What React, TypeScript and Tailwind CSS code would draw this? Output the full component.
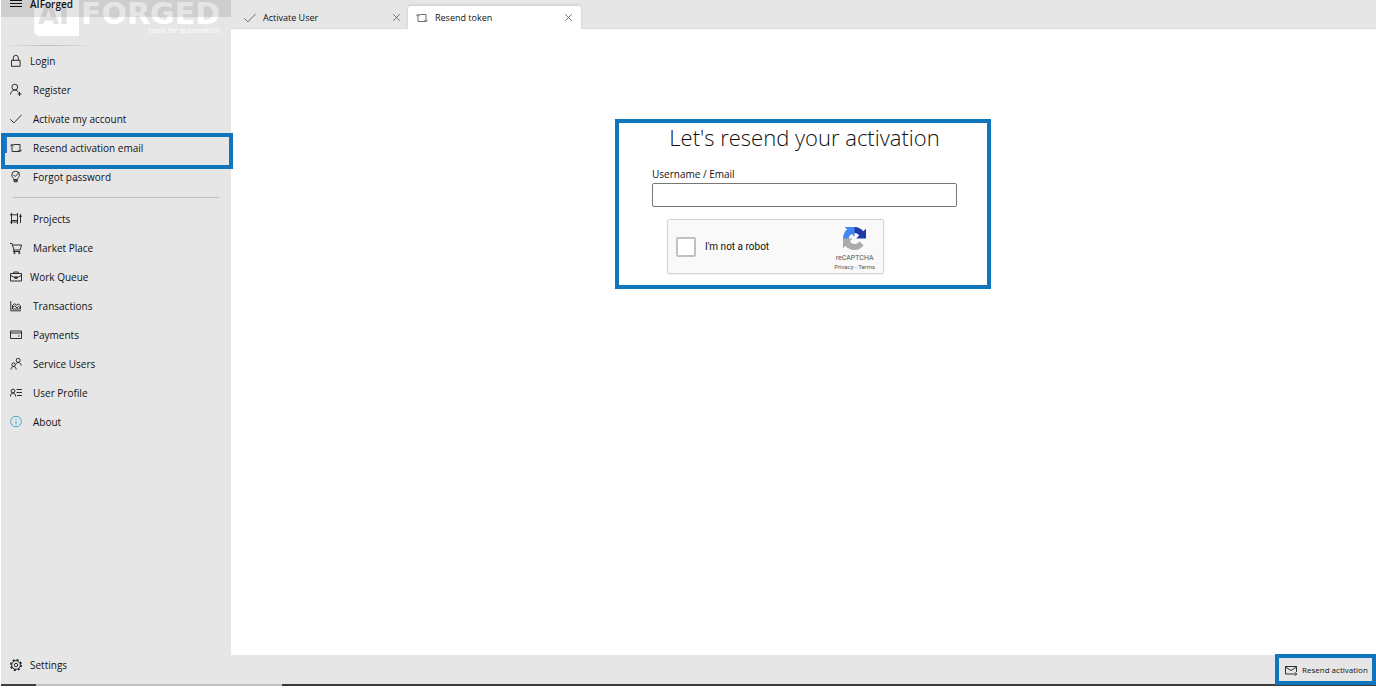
import type { ReactNode } from "react";

type IconProps = { children: ReactNode; className?: string };

function Icon({ children, className = "size-3" }: IconProps) {
  return (
    <svg
      viewBox="0 0 12 12"
      fill="none"
      stroke="currentColor"
      strokeWidth="0.85"
      className={`shrink-0 overflow-visible ${className}`}
      aria-hidden="true"
    >
      {children}
    </svg>
  );
}

const resend = <path d="M2 2.5v7h7.5M3.5 2.5H10v7M.3 4.2 2 2.3l1.7 1.9M8.3 7.8 10 9.6l1.7-1.8" />;
const check = <path d="M.3 6.3 3.9 9.9 11.7 1.8" />;
const cross = <path d="m.5.5 11 11M11.5.5l-11 11" strokeWidth="1.4" />;

type Item = { label: string; icon: ReactNode; tight?: boolean; active?: boolean; blue?: boolean };

const account: Item[] = [
  { label: "Login", tight: true, icon: <path d="M1.5 5.3h8.6v6H1.5zM3.3 5.3V2.8a2.5 2.5 0 0 1 5 0v2.5" /> },
  {
    label: "Register",
    icon: <path d="M.5 10.5C.8 7.8 2.6 6 4.8 6c1.6 0 3 1 3.8 2.5M9.5 8v4M7.6 10h4M7.7 3.1a2.9 2.9 0 1 1-5.8 0 2.9 2.9 0 0 1 5.8 0" />,
  },
  { label: "Activate my account", icon: check },
  { label: "Resend activation email", icon: resend, active: true },
  {
    label: "Forgot password",
    icon: (
      <path d="M4 8.5C3.8 7 1.8 6.4 1.8 4a3.8 3.8 0 0 1 7.6 0c0 2.4-2 3-2.2 4.5zM3.5 3.8 5.2 5.5 9.5 1M4 8.5v2.3h3.2V8.5M4 9.7h3.2" />
    ),
  },
];

const work: Item[] = [
  { label: "Projects", icon: <path d="M1.5 0v11M7.5 0v11M0 1.8h7.5M0 9h7.5M1.5 7.5h6M10.5 1v9M9 3.2h3" /> },
  {
    label: "Market Place",
    icon: <path d="M0 1.5h2l2 6.5h6l1.6-5H2.6M4 8l-.8 1.5h7M5.2 11a.7.7 0 1 1-1.4 0 .7.7 0 0 1 1.4 0M10 11a.7.7 0 1 1-1.4 0 .7.7 0 0 1 1.4 0" />,
  },
  { label: "Work Queue", tight: true, icon: <path d="M.5 2.5h11V10H.5zM3.8 2.5V1h4.4v1.5M.5 4.3l4 2.2h3l4-2.2M4.8 5.8h2.4v1.5H4.8z" /> },
  {
    label: "Transactions",
    icon: <path d="M.8 1v9.8H11M2.5 9V5.5l2.2-1.8 2 1.6 1.6-1.5L10.5 6v3zM2.5 7.5l2.2-1.7L7 8l1.5-1.5 2 1.5" />,
  },
  { label: "Payments", icon: <path d="M.5 2h11v7.5H.5zM.5 4h11M8 7h1.5" /> },
  {
    label: "Service Users",
    icon: <path d="M1 11.5c.2-2 1.2-3 2.6-3s2.4 1 2.6 3M5.4 6.7a1.8 1.8 0 1 1-3.6 0 1.8 1.8 0 0 1 3.6 0M6 6c.4-1 1.2-1.5 2.2-1.5 1.6 0 2.8 1.1 3 3M10.2 2.3a2 2 0 1 1-4 0 2 2 0 0 1 4 0" />,
  },
  {
    label: "User Profile",
    icon: <path d="M.4 9.5C.5 7.3 1.5 6 3 6s2.5 1.3 2.6 3.5M4.9 4a1.9 1.9 0 1 1-3.8 0 1.9 1.9 0 0 1 3.8 0M6.5 2.5H12M6.5 5.5H12M7 8.5h5" />,
  },
  { label: "About", blue: true, icon: <path d="M11.3 5.5A5.3 5.3 0 1 1 .7 5.5a5.3 5.3 0 0 1 10.6 0M6 4.8v3.8M6 2.6v1.1" /> },
];

function NavList({ items }: { items: Item[] }) {
  return (
    <ul>
      {items.map(({ label, icon, tight, active, blue }) => (
        <li key={label} className="relative">
          <a
            href="#"
            aria-current={active ? "page" : undefined}
            className={`flex h-[29px] items-center pl-[9px] ${tight ? "gap-2" : "gap-[11px]"}`}
          >
            <Icon className={blue ? "size-3 text-[#1e9fd0]" : "size-3"}>{icon}</Icon>
            <span>{label}</span>
          </a>
          {active && (
            <span className="pointer-events-none absolute top-0 -right-0.5 left-0 z-10 h-9 border-4 border-[#0f75bd]">
              <span className="block h-4 w-0.5 bg-[#2f6fd0]" />
            </span>
          )}
        </li>
      ))}
    </ul>
  );
}

function Logo() {
  return (
    <svg viewBox="0 0 190 38" className="ml-8 h-[38px] w-[190px]" aria-label="AIForged, tools for automation">
      <path d="M1 0h45v36H8q-7 0-7-7z" fill="#fff" />
      <text x="5" y="24" fontSize="27" fontWeight="700" fontFamily="DejaVu Sans, sans-serif" fill="#e2e2e2">
        AI
      </text>
      <text x="48" y="24" fontSize="30" fontWeight="700" fontFamily="DejaVu Sans, sans-serif" fill="#fff">
        FORGED
      </text>
      <text x="187" y="33" textAnchor="end" fontSize="7" fontFamily="DejaVu Sans, sans-serif" fill="#fff">
        tools for automation
      </text>
    </svg>
  );
}

function CaptchaLogo() {
  return (
    <svg viewBox="0 0 64 64" className="size-[23px]" aria-hidden="true">
      <path
        d="M64 31.955l-.033-1.37V4.687l-7.16 7.16C50.948 4.674 42.033.093 32.05.093c-10.4 0-19.622 4.96-25.458 12.64l11.736 11.86a15.55 15.55 0 0 1 4.754-5.334c2.05-1.6 4.952-2.906 8.968-2.906.485 0 .86.057 1.135.163 4.976.393 9.288 3.14 11.828 7.124l-8.307 8.307L64 31.953"
        fill="#1c3aa9"
      />
      <path
        d="M31.862.094l-1.37.033H4.594l7.16 7.16C4.58 13.147 0 22.06 0 32.046c0 10.4 4.96 19.622 12.64 25.458L24.5 45.768a15.55 15.55 0 0 1-5.334-4.754c-1.6-2.05-2.906-4.952-2.906-8.968 0-.485.057-.86.163-1.135.393-4.976 3.14-9.288 7.124-11.828l8.307 8.307L31.86.095"
        fill="#4285f4"
      />
      <path
        d="M.001 32.045l.033 1.37v25.898l7.16-7.16c5.86 7.173 14.774 11.754 24.76 11.754 10.4 0 19.622-4.96 25.458-12.64l-11.736-11.86a15.55 15.55 0 0 1-4.754 5.334c-2.05 1.6-4.952 2.906-8.968 2.906-.485 0-.86-.057-1.135-.163-4.976-.393-9.288-3.14-11.828-7.124l8.307-8.307c-10.522.04-22.4.066-27.295-.005"
        fill="#ababab"
      />
    </svg>
  );
}

export default function App() {
  return (
    <div className="flex h-screen flex-col bg-white pb-[9px] pl-px font-['Open_Sans','Noto_Sans',sans-serif] text-[10px] leading-[14px] text-[#111]">
      <div className="flex min-h-0 flex-1">
        <aside className="flex w-[230px] shrink-0 flex-col bg-[#e6e6e6]">
          <div className="relative h-[45px] shrink-0">
            <Logo />
            <div className="absolute inset-x-0 top-0 flex h-[17px] items-start gap-2 bg-black/10 pl-[9px]">
              <button type="button" aria-label="Toggle navigation" className="h-2 w-3">
                <svg viewBox="0 0 12 8" stroke="currentColor" className="h-2 w-3" aria-hidden="true">
                  <path d="M0 .5h12M0 3.5h12M0 6.5h12" />
                </svg>
              </button>
              <h1 className="-mt-1 leading-4 font-semibold">AIForged</h1>
            </div>
          </div>
          <nav className="flex flex-1 flex-col">
            <div className="h-px w-24 shrink-0 bg-linear-to-r from-transparent via-[#bdbdbd] to-transparent" />
            <NavList items={account} />
            <hr className="mx-3 my-[6px] border-[#bdbdbd]" />
            <NavList items={work} />
            <a href="#" className="mt-auto mb-[5px] flex h-[29px] items-center gap-2 pl-[9px]">
              <Icon>
                <circle cx="6" cy="6" r="4.3" />
                <circle cx="6" cy="6" r="1.7" />
                <circle cx="6" cy="6" r="5.2" strokeWidth="1.5" strokeDasharray="2.04 2.04" />
              </Icon>
              Settings
            </a>
          </nav>
        </aside>

        <div className="flex min-w-0 flex-1 flex-col">
          <div role="tablist" className="flex h-[29px] shrink-0 items-end border-b border-[#dcdcdc] bg-[#e6e6e6] text-[9px]">
            <div className="flex h-[21px] w-[177px] items-center pl-[13px] pr-2">
              <button type="button" role="tab" aria-selected="false" className="flex flex-1 items-center gap-[7px]">
                <Icon className="size-3 text-[#555]">{check}</Icon>
                Activate User
              </button>
              <button type="button" aria-label="Close Activate User" className="text-[#555]">
                <Icon className="size-[7px]">{cross}</Icon>
              </button>
            </div>
            <div className="-mb-px flex h-[23px] w-[173px] items-center rounded-t-[3px] bg-white pl-2 pr-[9px] shadow-[0_-1px_3px_rgba(0,0,0,0.12)]">
              <button type="button" role="tab" aria-selected="true" className="flex flex-1 items-center gap-[7px]">
                <Icon className="size-3 text-[#555]">{resend}</Icon>
                Resend token
              </button>
              <button type="button" aria-label="Close Resend token" className="text-[#555]">
                <Icon className="size-[7px]">{cross}</Icon>
              </button>
            </div>
          </div>

          <main className="flex-1 bg-white pt-[90px] pr-px">
            <form className="mx-auto w-[376px] border-4 border-[#0f75bd] pr-[30px] pb-[11px] pl-[33px]">
              <h2 className="text-center text-[22px] leading-7 font-light whitespace-nowrap">
                Let's resend your activation
              </h2>
              <label htmlFor="username" className="mt-4 block">
                Username / Email
              </label>
              <input
                id="username"
                type="text"
                className="mt-[2px] block h-6 w-full rounded-[2px] border border-[#777] bg-white px-2 outline-none"
              />
              <div className="mt-3 ml-[15px] flex h-[55px] w-[217px] items-center rounded-[2px] border border-[#d3d3d3] bg-[#f9f9f9] px-2 font-[Roboto,sans-serif] shadow-xs">
                <input
                  id="robot"
                  type="checkbox"
                  className="size-5 appearance-none rounded-[2px] border-2 border-[#c1c1c1] bg-white"
                />
                <label htmlFor="robot" className="ml-[9px] flex-1">
                  I'm not a robot
                </label>
                <div className="flex flex-col items-center pt-1 text-[#555]">
                  <CaptchaLogo />
                  <span className="mt-1 text-[7px] leading-[9px]">reCAPTCHA</span>
                  <span className="text-[6px] leading-[7px] whitespace-nowrap">
                    <a href="#">Privacy</a> - <a href="#">Terms</a>
                  </span>
                </div>
              </div>
            </form>
          </main>

          <footer className="flex h-[29px] shrink-0 items-center justify-end bg-[#e6e6e6]">
            <button
              type="button"
              className="relative z-10 flex h-[31px] w-[101px] items-center gap-[5px] border-4 border-[#0f75bd] bg-[#e6e6e6] pl-1.5 text-[8px] whitespace-nowrap"
            >
              <Icon>
                <path d="M7 10H.5V2.5h11V8M.5 3 6 6.5 11.5 3M7 10h4.5M10 8.3l1.7 1.7-1.7 1.7" />
              </Icon>
              Resend activation
            </button>
          </footer>
        </div>
      </div>
      <div className="flex h-0.5 shrink-0">
        <div className="w-[35px] bg-[#3f3f3f]" />
        <div className="w-[246px] bg-[#c0c0c0]" />
        <div className="flex-1 bg-[#3a3a3c]" />
      </div>
    </div>
  );
}
